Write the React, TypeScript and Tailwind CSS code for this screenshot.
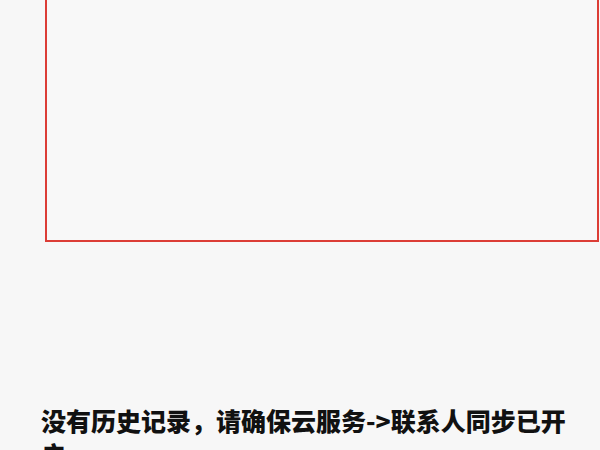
import React from 'react'

export default function App() {
  return (
    <div className="w-[600px] h-[450px] overflow-hidden bg-[#f7f7f7]" style={{ fontFamily: '"Noto Sans CJK SC", "Noto Sans", sans-serif' }}>
      <div className="ml-[45px] mt-[-10px] w-[554px] h-[252px] border-2 border-[#dc3d36] bg-[#f8f8f8]" />
      <div className="mt-[161px] pl-[41px] pr-[22px]">
        <p className="text-[25px] leading-[34px] font-black text-[#111]">
          没有历史记录，请确保云服务-&gt;联系人同步已开启
        </p>
      </div>
    </div>
  )
}
